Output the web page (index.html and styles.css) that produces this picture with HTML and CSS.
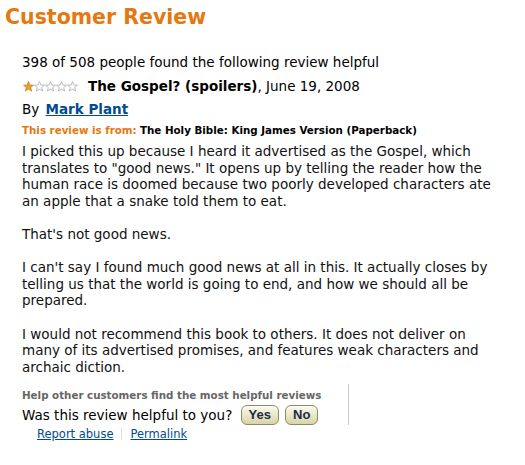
FILE: index.html
```html
<!DOCTYPE html>
<html>
<head>
<meta charset="utf-8">
<link rel="stylesheet" href="styles.css">
</head>
<body>
<h1 class="title">Customer Review</h1>
<div class="review">
  <div class="count">398 of 508 people found the following review helpful</div>
  <div class="headline"><svg class="stars" width="55" height="11" viewBox="0 0 55 11">
        <defs>
          <path id="st" d="M5.5 0.6 L6.9 4.0 L10.5 4.2 L7.7 6.5 L8.6 10.1 L5.5 8.1 L2.4 10.1 L3.3 6.5 L0.5 4.2 L4.1 4.0 Z"/>
        </defs>
        <use href="#st" x="0" fill="#f0a020" stroke="#b86f00" stroke-width="0.6"/>
        <use href="#st" x="11" fill="#fff" stroke="#aaa" stroke-width="0.8"/>
        <use href="#st" x="22" fill="#fff" stroke="#aaa" stroke-width="0.8"/>
        <use href="#st" x="33" fill="#fff" stroke="#aaa" stroke-width="0.8"/>
        <use href="#st" x="44" fill="#fff" stroke="#aaa" stroke-width="0.8"/>
      </svg><b class="rtitle">The Gospel? (spoilers)</b>, June 19, 2008</div>
  <div class="author">By <a class="name" href="#">Mark Plant</a></div>
  <div class="source"><span class="from">This review is from:</span> <b>The Holy Bible: King James Version (Paperback)</b></div>
  <div class="body">I picked this up because I heard it advertised as the Gospel, which translates to "good news." It opens up by telling the reader how the human race is doomed because two poorly developed characters ate an apple that a snake told them to eat.<br><br>That's not good news.<br><br>I can't say I found much good news at all in this. It actually closes by telling us that the world is going to end, and how we should all be prepared.<br><br>I would not recommend this book to others. It does not deliver on many of its advertised promises, and features weak characters and archaic diction.</div>
  <div class="vote">
    <div class="vote-main">
      <div class="help">Help other customers find the most helpful reviews</div>
      <div class="ask">Was this review helpful to you? <button class="btn">Yes</button><button class="btn">No</button></div>
    </div>
  </div>
  <div class="links"><a href="#">Report abuse</a><span class="sep"></span><a href="#">Permalink</a></div>
</div>
</body>
</html>
```

FILE: styles.css
```css
html, body {
  margin: 0;
  padding: 0;
  background: #fff;
}
body {
  font-family: "DejaVu Sans", Verdana, sans-serif;
  color: #000;
  font-size: 13.5px;
}
.title {
  margin: 4px 0 0 5px;
  font-size: 20.5px;
  line-height: 26px;
  font-weight: bold;
  color: #e47911;
}
.review {
  padding: 24px 0 0 22px;
}
.count {
  line-height: 16px;
}
.headline {
  margin-top: 8px;
  line-height: 16px;
}
.stars {
  display: inline-block;
  vertical-align: -1px;
  margin-left: 1px;
  margin-right: 10px;
}
.author {
  margin-top: 7px;
  line-height: 16px;
}
.name {
  color: #004b91;
  font-weight: bold;
  margin-left: 2px;
}
.source {
  margin-top: 6px;
  font-size: 10.3px;
  line-height: 14px;
}
.from {
  color: #e47911;
  font-weight: bold;
}
.body {
  margin-top: 6px;
  line-height: 16.6px;
  width: 480px;
  color: #111;
}
.vote {
  margin-top: 9px;
  display: flex;
}
.vote-main {
  width: 326px;
  padding-top: 4px;
  border-right: 1px solid #ccc;
  height: 37px;
}
.help {
  font-size: 10.3px;
  line-height: 14px;
  font-weight: bold;
  color: #666;
}
.ask {
  margin-top: 3px;
  line-height: 20px;
  display: flex;
  align-items: center;
  white-space: pre;
}
.btn {
  font-family: "Liberation Sans Narrow", "Liberation Sans", Arial, sans-serif;
  font-size: 13px;
  font-weight: bold;
  color: #1a2a4a;
  height: 20px;
  padding: 0 7px;
  margin-left: 4px;
  border: 1px solid #8a8a6a;
  border-radius: 6px;
  background: linear-gradient(#fbfbe8, #e6e4c2 60%, #d8d4a8);
  box-shadow: inset 0 1px 0 #fff;
  line-height: 18px;
}
.btn + .btn { margin-left: 6px; }
.links {
  margin-top: 2px;
  padding-left: 15px;
  font-size: 11.5px;
  line-height: 14px;
  display: flex;
  align-items: center;
}
.links a {
  color: #004b91;
}
.sep {
  display: inline-block;
  width: 1px;
  height: 12px;
  background: #ddd;
  margin: 0 8px;
}
```
